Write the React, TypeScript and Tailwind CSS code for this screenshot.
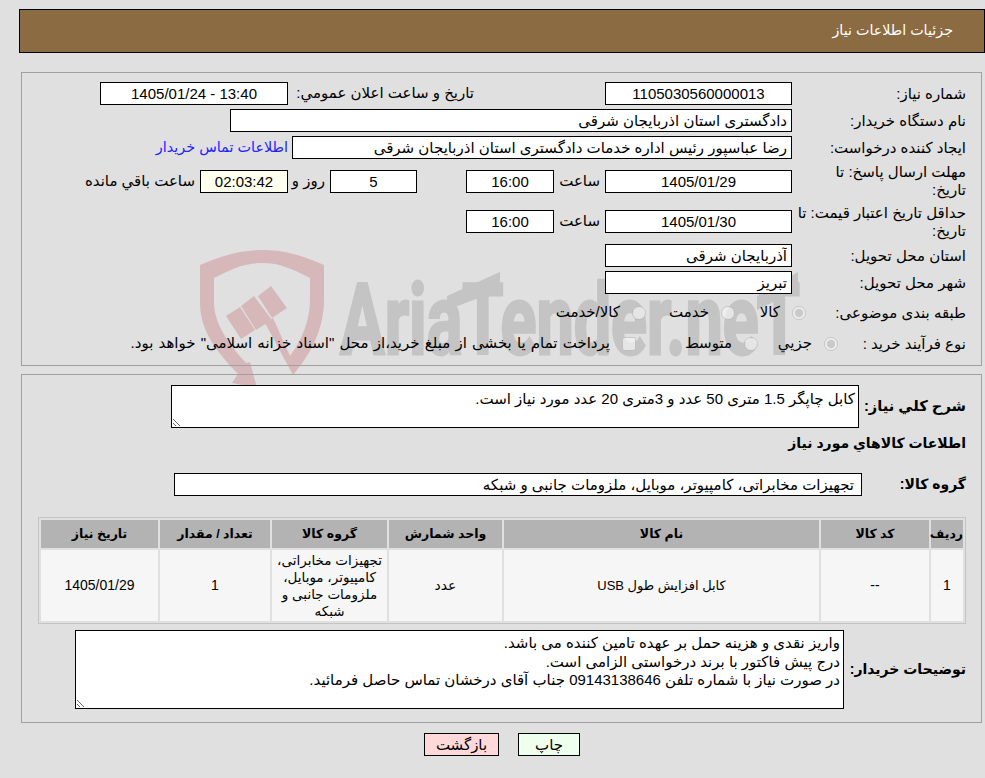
/**
 * Tender details page: header, request fields, goods table, buyer notes
 */

const box = "h-[23px] border border-black bg-white px-[4px] text-[15px] outline-none";

function Field({ value, className }: { value: string; className: string }) {
  return <input readOnly value={value} className={`${box} ${className}`} />;
}

function Label({ children }: { children: React.ReactNode }) {
  return <div className="w-[174px] shrink-0 leading-[18px]">{children}</div>;
}

function Choice({ label, checked, type = "radio", className }: { label: string; checked?: boolean; type?: string; className: string }) {
  return (
    <label className={`flex shrink-0 items-center ${className}`}>
      <input type={type} disabled checked={!!checked} readOnly className="m-0 h-[14px] w-[14px] shrink-0" />
      <span className="mr-[12px] whitespace-nowrap [word-spacing:1px]">{label}</span>
    </label>
  );
}

/* Logo sits behind the panels, text stays real text */
function Watermark() {
  return (
    <svg dir="ltr" className="absolute left-0 top-0" width="985" height="778" viewBox="0 0 985 778">
      <g fill="#d6b8ba">
        <path d="M200 265C225 255 240 250 262 250C285 250 300 255 324 265L324 300C324 330 310 355 293 375L265 323L273 318L290 356C302 340 310 320 310 300L310 278C292 269 280 263 262 263C244 263 232 269 214 278L214 302C214 325 230 345 246 363L250 362L257 388L232 383L238 374C215 350 200 330 200 302Z" />
        <polygon points="226,316 240,307 255,330 241,339" />
        <polygon points="241,306 254,296 272,320 256,330" />
        <polygon points="258,296 271,286 287,308 272,318" />
      </g>
      <g fill="#c4c4c4">
        <text x="340" y="354" direction="ltr" fontFamily="Roboto" fontWeight="700" fontSize="99" stroke="#c4c4c4" strokeWidth="3" textLength="460" lengthAdjust="spacingAndGlyphs">
          AriaTender.neT
        </text>
        <polygon points="447,296 500,272 500,290 447,310" />
        <polygon points="757,296 798,272 798,290 757,310" />
      </g>
    </svg>
  );
}

const heads = [
  { title: "ردیف", width: "w-[32px]" },
  { title: "کد کالا", width: "w-[108px]" },
  { title: "نام کالا", width: "w-[315px]" },
  { title: "واحد شمارش", width: "w-[113px]" },
  { title: "گروه کالا", width: "w-[115px]" },
  { title: "تعداد / مقدار", width: "w-[110px]" },
  { title: "تاریخ نیاز", width: "w-[117px]" },
];

const cells = [
  { text: "1", size: "text-[14px]" },
  { text: "--", size: "text-[14px]" },
  { text: "کابل افزایش طول USB", size: "text-[13px]" },
  { text: "عدد", size: "text-[14px]" },
  { text: "تجهیزات مخابراتی، کامپیوتر، موبایل، ملزومات جانبی و شبکه", size: "text-[13.5px]" },
  { text: "1", size: "text-[14px]" },
  { text: "1405/01/29", size: "text-[14px]" },
];

export default function App() {
  return (
    <div dir="rtl" className="relative h-[778px] w-[985px] overflow-hidden bg-[#e0e0e0] font-['Liberation_Sans','DejaVu_Sans',sans-serif] text-[15px] text-black">
      <Watermark />
      <div className="relative pt-[9px]">
        {/* Title bar */}
        <div className="flex h-[44px] w-[966px] items-center border border-black bg-[#8b6b41] pr-[31px] text-[14.3px] text-white">
          جزئیات اطلاعات نیاز
        </div>

        {/* Request fields */}
        <div className="mr-[3px] mt-[19px] h-[294px] w-[961px] border border-[#a0a0a0] pr-[15px] pt-[9px]">
          <div className="flex h-[23px] items-center">
            <Label>شماره نیاز:</Label>
            <Field value="1105030560000013" className="w-[187px] text-center" />
            <div className="mr-[131px] w-[186px] whitespace-nowrap">تاريخ و ساعت اعلان عمومي:</div>
            <Field value="13:40 - 1405/01/24" className="w-[188px] text-center" />
          </div>
          <div className="mt-[4px] flex h-[23px] items-center">
            <Label>نام دستگاه خریدار:</Label>
            <Field value="دادگستری استان اذربایجان شرقی" className="w-[562px]" />
          </div>
          <div className="mt-[4px] flex h-[23px] items-center">
            <Label>ایجاد کننده درخواست:</Label>
            <Field value="رضا عباسپور رئیس اداره خدمات دادگستری استان اذربایجان شرقی" className="w-[500px]" />
            <a className="mr-[4px] whitespace-nowrap text-[14.4px] text-[#2222ff]">اطلاعات تماس خریدار</a>
          </div>
          <div className="mt-[4px] flex h-[36px] items-center">
            <div className="w-[174px] shrink-0 pl-2 leading-[18px]">مهلت ارسال پاسخ: تا تاریخ:</div>
            <Field value="1405/01/29" className="w-[187px] text-center" />
            <div className="w-[51px] pr-[5px]">ساعت</div>
            <Field value="16:00" className="w-[88px] text-center" />
            <Field value="5" className="mr-[49px] w-[87px] text-center" />
            <div className="w-[42px] pr-[5px] whitespace-nowrap">روز و</div>
            <Field value="02:03:42" className="w-[88px] !bg-[#ffffee] text-center" />
            <div className="pr-[5px] whitespace-nowrap">ساعت باقي مانده</div>
          </div>
          <div className="mt-[4px] flex h-[37px] items-center">
            <Label>حداقل تاریخ اعتبار قیمت: تا تاریخ:</Label>
            <Field value="1405/01/30" className="w-[187px] text-center" />
            <div className="w-[51px] pr-[5px]">ساعت</div>
            <Field value="16:00" className="w-[88px] text-center" />
          </div>
          <div className="mt-[4px] flex h-[23px] items-center">
            <Label>استان محل تحویل:</Label>
            <Field value="آذربایجان شرقی" className="w-[187px]" />
          </div>
          <div className="mt-[4px] flex h-[23px] items-center">
            <Label>شهر محل تحویل:</Label>
            <Field value="تبریز" className="w-[187px]" />
          </div>
          <div className="mt-[7px] flex h-[23px] items-center">
            <Label>طبقه بندی موضوعی:</Label>
            <Choice label="کالا" checked className="mr-[-14px] w-[71px]" />
            <Choice label="خدمت" className="w-[89px]" />
            <Choice label="کالا/خدمت" className="" />
          </div>
          <div className="mt-[8px] flex h-[23px] items-center">
            <Label>نوع فرآیند خرید :</Label>
            <Choice label="جزيي" checked className="mr-[-46px] w-[80px]" />
            <Choice label="متوسط" className="w-[122px]" />
            <Choice type="checkbox" label='پرداخت تمام یا بخشی از مبلغ خرید،از محل "اسناد خزانه اسلامی" خواهد بود.' className="" />
          </div>
        </div>

        {/* Goods and buyer notes */}
        <div className="mr-[3px] mt-[8px] h-[349px] w-[961px] border border-[#a0a0a0] pr-[15px] pt-[10px]">
          <div className="flex h-[43px] items-center">
            <div className="w-[107px] shrink-0 text-[14.7px] font-bold">شرح کلي نياز:</div>
            <textarea readOnly defaultValue="کابل چاپگر 1.5 متری 50 عدد و 3متری 20 عدد مورد نیاز است." className="h-[43px] w-[688px] border border-black bg-white px-[3px] pt-[4px] text-[15px] leading-[18px] outline-none" />
          </div>
          <div className="mt-[6px] text-[14px] leading-[18px] font-bold">اطلاعات کالاهاي مورد نياز</div>
          <div className="mt-[21px] flex h-[23px] items-center">
            <div className="w-[104px] shrink-0 text-[14px] font-bold">گروه کالا:</div>
            <input readOnly value="تجهیزات مخابراتی، کامپیوتر، موبایل، ملزومات جانبی و شبکه" className="h-[23px] w-[688px] border border-black bg-white pr-[7px] text-[15px] outline-none" />
          </div>
          <table className="mt-[21px] w-[928px] table-fixed border-separate border-spacing-[2px] border border-[#c4c4c4] text-center">
            <thead>
              <tr>
                {heads.map((h) => (
                  <th key={h.title} className={`${h.width} h-[28px] bg-[#b3b3b3] p-0 text-[12.5px] font-bold`}>{h.title}</th>
                ))}
              </tr>
            </thead>
            <tbody>
              <tr>
                {cells.map((c, i) => (
                  <td key={i} className={`${c.size} h-[71px] bg-[#f6f6f6] px-[3px] py-0 leading-[17px]`}>{c.text}</td>
                ))}
              </tr>
            </tbody>
          </table>
          <div className="mt-[6px] flex h-[79px] items-center">
            <div className="w-[122px] shrink-0 text-[14px] whitespace-nowrap font-bold">توضیحات خریدار:</div>
            <textarea
              readOnly
              defaultValue={"واریز نقدی و هزینه حمل بر عهده تامین کننده می باشد.\nدرج پیش فاکتور با برند درخواستی الزامی است.\nدر صورت نیاز با شماره تلفن 09143138646 جناب آقای درخشان تماس حاصل فرمائید."}
              className="h-[79px] w-[769px] border border-black bg-white px-[3px] pt-[3px] text-[15px] leading-[18.5px] outline-none"
            />
          </div>
        </div>

        {/* Actions */}
        <div className="mt-[10px] flex h-[23px] items-center">
          <button className="mr-[405px] h-[23px] w-[62px] border border-black bg-[#eeffee] text-[15px]">چاپ</button>
          <button className="mr-[19px] h-[23px] w-[75px] border border-black bg-[#ffd9d9] text-[15px]">بازگشت</button>
        </div>
      </div>
    </div>
  );
}
